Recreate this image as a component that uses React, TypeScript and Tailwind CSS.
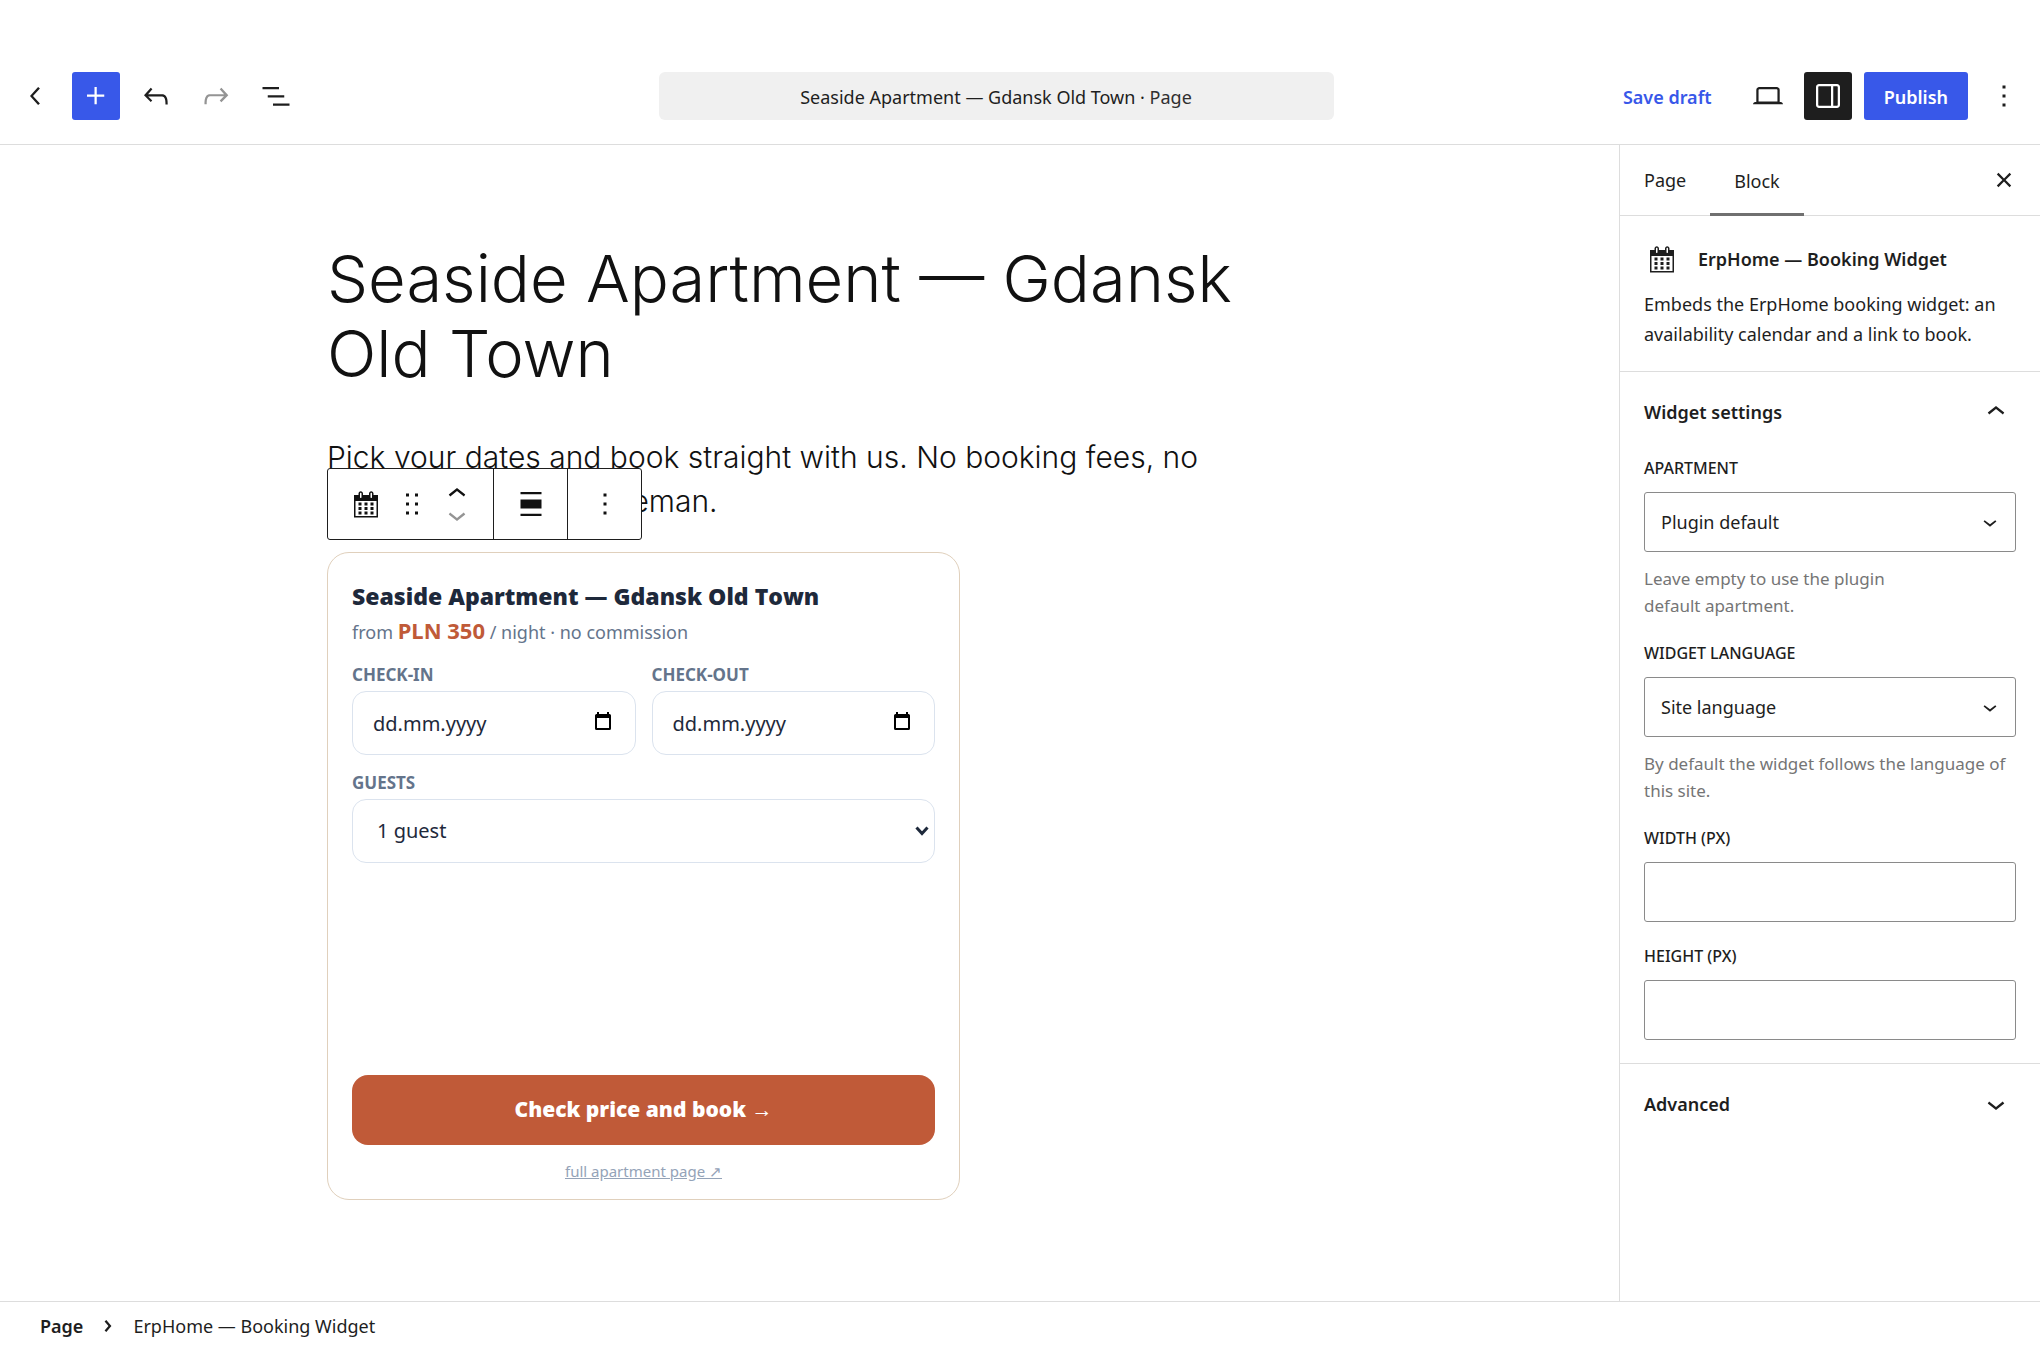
import { useState } from 'react';
import type { ReactNode } from 'react';

const ICONS = {
  back: 'M14.6 7l-1.2-1L8 12l5.4 6 1.2-1-4.6-5z',
  plus: 'M11 12.5V17.5H12.5V12.5H17.5V11H12.5V6H11V11H6V12.5H11Z',
  undo: 'M18.3 11.7c-.6-.6-1.4-.9-2.3-.9H6.7l2.9-3.3-1.1-1-4.5 5L8.5 16l1-1-2.7-2.7H16c.5 0 .9.2 1.3.5 1 1 1 3.4 1 4.5v.3h1.5v-.2c0-1.5 0-4.3-1.5-5.7z',
  redo: 'M15.6 6.5l-1.1 1 2.9 3.3H8c-.9 0-1.7.3-2.3.9-1.4 1.5-1.4 4.2-1.4 5.6v.2h1.5v-.3c0-1.1 0-3.5 1-4.5.3-.3.7-.5 1.3-.5h9.2L14.5 15l1.1 1.1 4.6-4.6-4.6-5z',
  listView: 'M3 6h11v1.5H3V6Zm3.5 5.5h11V13h-11v-1.5ZM21 17H10v1.5h11V17Z',
  desktop: 'M20.5 16h-.7V8c0-1.1-.9-2-2-2H6.2c-1.1 0-2 .9-2 2v8h-.7c-.8 0-1.5.7-1.5 1.5h20c0-.8-.7-1.5-1.5-1.5zM5.7 8c0-.3.2-.5.5-.5h11.6c.3 0 .5.2.5.5v7.6H5.7V8z',
  drawer: 'M18 4H6c-1.1 0-2 .9-2 2v12c0 1.1.9 2 2 2h12c1.1 0 2-.9 2-2V6c0-1.1-.9-2-2-2zm-4 14.5H6c-.3 0-.5-.2-.5-.5V6c0-.3.2-.5.5-.5h8v13zm4.5-.5c0 .3-.2.5-.5.5h-2.5v-13H18c.3 0 .5.2.5.5v12z',
  more: 'M13 19h-2v-2h2v2zm0-6h-2v-2h2v2zm0-6h-2V5h2v2z',
  close: 'M12 13.06l3.712 3.713 1.061-1.06L13.061 12l3.712-3.712-1.06-1.06L12 10.938 8.288 7.227l-1.061 1.06L10.939 12l-3.712 3.712 1.06 1.061L12 13.061z',
  chevronUp: 'M6.5 12.4L12 8l5.5 4.4-.9 1.2L12 10l-4.5 3.6-1-1.2z',
  chevronDown: 'M17.5 11.6L12 16l-5.5-4.4.9-1.2L12 14l4.5-3.6 1 1.2z',
  chevronRight: 'M10.862 8.04l3.419 3.989-3.419 3.988-1.139-.977 2.582-3.011-2.582-3.012 1.139-.977z',
  drag: 'M8 7h2V5H8v2zm0 6h2v-2H8v2zm0 6h2v-2H8v2zm6-14v2h2V5h-2zm0 8h2v-2h-2v2zm0 6h2v-2h-2v2z',
  align: 'M19 5.5H5V4h14v1.5ZM19 20H5v-1.5h14V20ZM5 9h14v6H5V9Z',
};

function Icon({ name, className = 'size-9' }: { name: keyof typeof ICONS; className?: string }) {
  return (
    <svg viewBox="0 0 24 24" className={`shrink-0 ${className}`} fill="currentColor" aria-hidden="true">
      <path d={ICONS[name]} />
    </svg>
  );
}

function CalendarIcon() {
  return (
    <svg viewBox="0 0 20 20" className="size-[30px] shrink-0" fill="currentColor" aria-hidden="true">
      <path d="M15 4h3v15H2V4h3V3c0-.41.15-.76.44-1.06.29-.29.65-.44 1.06-.44s.77.15 1.06.44c.29.3.44.65.44 1.06v1h4V3c0-.41.15-.76.44-1.06.29-.29.65-.44 1.06-.44s.77.15 1.06.44c.29.3.44.65.44 1.06v1zM6 3v2.5c0 .14.05.26.15.36.09.09.21.14.35.14s.26-.05.35-.14c.1-.1.15-.22.15-.36V3c0-.14-.05-.26-.15-.35-.09-.1-.21-.15-.35-.15s-.26.05-.35.15c-.1.09-.15.21-.15.35zm7 0v2.5c0 .14.05.26.14.36.1.09.22.14.36.14s.26-.05.36-.14c.09-.1.14-.22.14-.36V3c0-.14-.05-.26-.14-.35-.1-.1-.22-.15-.36-.15s-.26.05-.36.15c-.09.09-.14.21-.14.35zm4 15V8H3v10h14zM7 9v2H5V9h2zm2 0h2v2H9V9zm4 2V9h2v2h-2zm-6 1v2H5v-2h2zm2 0h2v2H9v-2zm4 2v-2h2v2h-2zm-6 1v2H5v-2h2zm4 2H9v-2h2v2zm4 0h-2v-2h2v2z" />
    </svg>
  );
}

function IconButton({ icon, label, className = '', disabled = false }: {
  icon: keyof typeof ICONS;
  label: string;
  className?: string;
  disabled?: boolean;
}) {
  return (
    <button
      type="button"
      aria-label={label}
      disabled={disabled}
      className={`flex size-12 shrink-0 items-center justify-center rounded-[3px] ${className}`}
    >
      <Icon name={icon} />
    </button>
  );
}

function EditorHeader() {
  return (
    <header className="mt-12 flex h-[97px] items-center border-b border-[#dddddd]">
      <div className="flex flex-1 items-center gap-3">
        <button type="button" aria-label="Back" className="flex h-12 w-[60px] items-center justify-end pr-[6px]">
          <Icon name="back" />
        </button>
        <IconButton icon="plus" label="Add block" className="bg-[#3858e9] text-white" />
        <IconButton icon="undo" label="Undo" />
        <IconButton icon="redo" label="Redo" className="text-[#949494]" disabled />
        <IconButton icon="listView" label="Document overview" />
      </div>
      <button type="button" className="h-12 w-[675px] rounded-md bg-[#f0f0f0] pt-0.5 text-lg">
        Seaside Apartment — Gdansk Old Town · <span className="text-[#2f2f2f]">Page</span>
      </button>
      <div className="ml-9 flex flex-1 items-center justify-end gap-3 pr-3">
        <button type="button" className="h-12 px-5 pt-0.5 text-lg font-semibold whitespace-nowrap text-[#3858e9]">
          Save draft
        </button>
        <IconButton icon="desktop" label="View" />
        <IconButton icon="drawer" label="Settings" className="bg-[#1e1e1e] text-white" />
        <button type="button" className="h-12 rounded-[3px] bg-[#3858e9] px-5 pt-0.5 text-lg font-semibold text-white">
          Publish
        </button>
        <IconButton icon="more" label="Options" />
      </div>
    </header>
  );
}

function BlockToolbar() {
  return (
    <div
      role="toolbar"
      aria-label="Block tools"
      className="absolute bottom-full left-0 mb-3 flex h-[72px] divide-x divide-[#1e1e1e] rounded-[3px] border border-[#1e1e1e] bg-white"
    >
      <div className="flex items-center pr-[18px] pl-[23px]">
        <button type="button" aria-label="ErpHome — Booking Widget">
          <CalendarIcon />
        </button>
        <button type="button" aria-label="Drag" className="ml-[13px]">
          <Icon name="drag" />
        </button>
        <div className="ml-[9px] flex flex-col">
          <button type="button" aria-label="Move up" className="flex h-[21px] items-center">
            <Icon name="chevronUp" />
          </button>
          <button type="button" aria-label="Move down" disabled className="flex h-[21px] items-center text-[#949494]">
            <Icon name="chevronDown" />
          </button>
        </div>
      </div>
      <button type="button" aria-label="Align" className="flex w-[74px] items-center justify-center">
        <Icon name="align" />
      </button>
      <button type="button" aria-label="Options" className="flex w-[73px] items-center justify-center">
        <Icon name="more" />
      </button>
    </div>
  );
}

function DateField({ id, label }: { id: string; label: string }) {
  const [value, setValue] = useState('');
  return (
    <div className="min-w-0 flex-1">
      <label htmlFor={id} className="block text-[17px] leading-6 font-bold text-[#64748b] uppercase">
        {label}
      </label>
      <div className="relative mt-1">
        <input
          id={id}
          type="text"
          placeholder="dd.mm.yyyy"
          value={value}
          onChange={(e) => setValue(e.target.value)}
          className="h-16 w-full rounded-[14px] border border-[#dbe3ee] px-5 text-xl text-[#1e293b] placeholder:text-[#1e293b]"
        />
        <svg viewBox="0 0 18 20" className="absolute top-5 right-6 h-5 w-[18px] text-black" aria-hidden="true">
          <path
            fill="currentColor"
            fillRule="evenodd"
            d="M3 1h2v2h8V1h2v2h.500a1.500 1.500 0 0 1 1.500 1.500V17.500a1.500 1.500 0 0 1-1.500 1.500h-13A1.500 1.500 0 0 1 1 17.500V4.500A1.500 1.500 0 0 1 2.500 3H3zM3 7V17h12V7z"
          />
        </svg>
      </div>
    </div>
  );
}

function BookingWidget() {
  return (
    <form
      onSubmit={(e) => e.preventDefault()}
      className="flex min-h-[648px] w-full max-w-[633px] flex-col rounded-[22px] border border-[#e0d0bc] px-6 pt-[27px] pb-[14px] text-[#1e293b]"
    >
      <h2 className="font-['Open_Sans'] text-[23px] leading-8 font-extrabold">Seaside Apartment — Gdansk Old Town</h2>
      <p className="mt-0.5 text-lg leading-8 text-[#64748b]">
        from <strong className="text-[22px] font-bold text-[#c05a38]">PLN 350</strong> / night · no commission
      </p>

      <div className="mt-[15px] flex gap-4">
        <DateField id="check-in" label="Check-in" />
        <DateField id="check-out" label="Check-out" />
      </div>

      <label htmlFor="guests" className="mt-4 block text-[17px] leading-6 font-bold text-[#64748b] uppercase">
        Guests
      </label>
      <div className="relative mt-1">
        <select
          id="guests"
          className="h-16 w-full appearance-none rounded-[14px] border border-[#dbe3ee] px-6 text-xl"
        >
          <option>1 guest</option>
          <option>2 guests</option>
          <option>3 guests</option>
        </select>
        <svg viewBox="0 0 14 10" className="pointer-events-none absolute top-[27px] right-[6px] h-[10px] w-[14px]" aria-hidden="true">
          <path d="M1.500 1.500L7 7.500l5.500-6" fill="none" stroke="currentColor" strokeWidth="3" />
        </svg>
      </div>

      <button
        type="submit"
        className="mt-auto h-[70px] w-full rounded-2xl bg-[#c05a38] font-['Open_Sans'] text-[21px] font-extrabold text-white"
      >
        Check price and book →
      </button>
      <p className="mt-3 text-center text-[15px] leading-7 text-[#94a3b8]">
        <a href="#apartment" className="underline">full apartment page ↗</a>
      </p>
    </form>
  );
}

function Canvas() {
  return (
    <main className="min-w-0 flex-1 px-6 pt-24 text-[#111111]">
      <div className="mx-auto max-w-[965px]">
        <h1 className="font-['Inter'] text-[65px] leading-[75px] font-light">
          Seaside Apartment — Gdansk Old Town
        </h1>
        <p className="mt-11 font-['Inter'] text-[30px] leading-[44px] font-light">
          Pick your dates and book straight with us. No booking fees, no commission, no middleman.
        </p>
        <div className="relative mt-[29px]">
          <BlockToolbar />
          <BookingWidget />
        </div>
      </div>
    </main>
  );
}

function Field({ id, label, help, children }: { id: string; label: string; help?: ReactNode; children: ReactNode }) {
  return (
    <div>
      <label htmlFor={id} className="mb-3 block text-base leading-6 font-medium uppercase">
        {label}
      </label>
      {children}
      {help && <p className="mt-[13px] text-[17px] leading-[27px] text-[#757575]">{help}</p>}
    </div>
  );
}

function SidebarSelect({ id, options }: { id: string; options: string[] }) {
  return (
    <div className="relative">
      <select id={id} className="h-[60px] w-full appearance-none rounded-[3px] border border-[#8a8a8a] px-4 text-lg">
        {options.map((option) => (
          <option key={option}>{option}</option>
        ))}
      </select>
      <Icon name="chevronDown" className="pointer-events-none absolute top-4 right-3 size-7" />
    </div>
  );
}

function SettingsSidebar() {
  return (
    <aside className="w-[421px] shrink-0 border-l border-[#dddddd]">
      <div className="flex h-[71px] items-stretch border-b border-[#dddddd]">
        <button type="button" className="px-6 text-lg">Page</button>
        <button type="button" className="-mb-px border-b-[3px] border-[#707070] px-6 pt-[3px] text-lg">Block</button>
        <button type="button" aria-label="Close settings" className="mr-[18px] ml-auto">
          <Icon name="close" />
        </button>
      </div>

      <section className="border-b border-[#dddddd] px-6 pt-7 pb-[22px]">
        <div className="flex items-center gap-[21px] pl-[3px]">
          <CalendarIcon />
          <h2 className="text-lg leading-[30px] font-semibold">ErpHome — Booking Widget</h2>
        </div>
        <p className="mt-[15px] text-lg leading-[30px]">
          Embeds the ErpHome booking widget: an availability calendar and a link to book.
        </p>
      </section>

      <section className="border-b border-[#dddddd] px-6 pb-[23px]">
        <button type="button" className="flex h-20 w-full items-center justify-between pr-0.5 text-lg font-semibold">
          Widget settings
          <Icon name="chevronUp" />
        </button>
        <div className="flex flex-col gap-[22px] pt-1">
          <Field id="apartment" label="Apartment" help={<>Leave empty to use the plugin<br />default apartment.</>}>
            <SidebarSelect id="apartment" options={['Plugin default']} />
          </Field>
          <Field id="language" label="Widget language" help="By default the widget follows the language of this site.">
            <SidebarSelect id="language" options={['Site language']} />
          </Field>
          <Field id="width" label="Width (px)">
            <input id="width" type="number" className="h-[60px] w-full rounded-[3px] border border-[#8a8a8a] px-4 text-lg" />
          </Field>
          <Field id="height" label="Height (px)">
            <input id="height" type="number" className="h-[60px] w-full rounded-[3px] border border-[#8a8a8a] px-4 text-lg" />
          </Field>
        </div>
      </section>

      <button type="button" className="flex h-20 w-full items-center justify-between pr-[26px] pl-6 text-lg font-semibold">
        Advanced
        <Icon name="chevronDown" />
      </button>
    </aside>
  );
}

export default function App() {
  return (
    <div className="flex min-h-screen flex-col bg-white font-['Noto_Sans','Open_Sans',sans-serif] text-[#1e1e1e]">
      <EditorHeader />
      <div className="flex flex-1">
        <Canvas />
        <SettingsSidebar />
      </div>
      <footer className="flex h-[49px] items-center border-t border-[#dddddd] px-10 text-lg">
        <a href="#page" className="font-semibold">Page</a>
        <Icon name="chevronRight" className="mx-[7px] size-9" />
        <span>ErpHome — Booking Widget</span>
      </footer>
    </div>
  );
}
